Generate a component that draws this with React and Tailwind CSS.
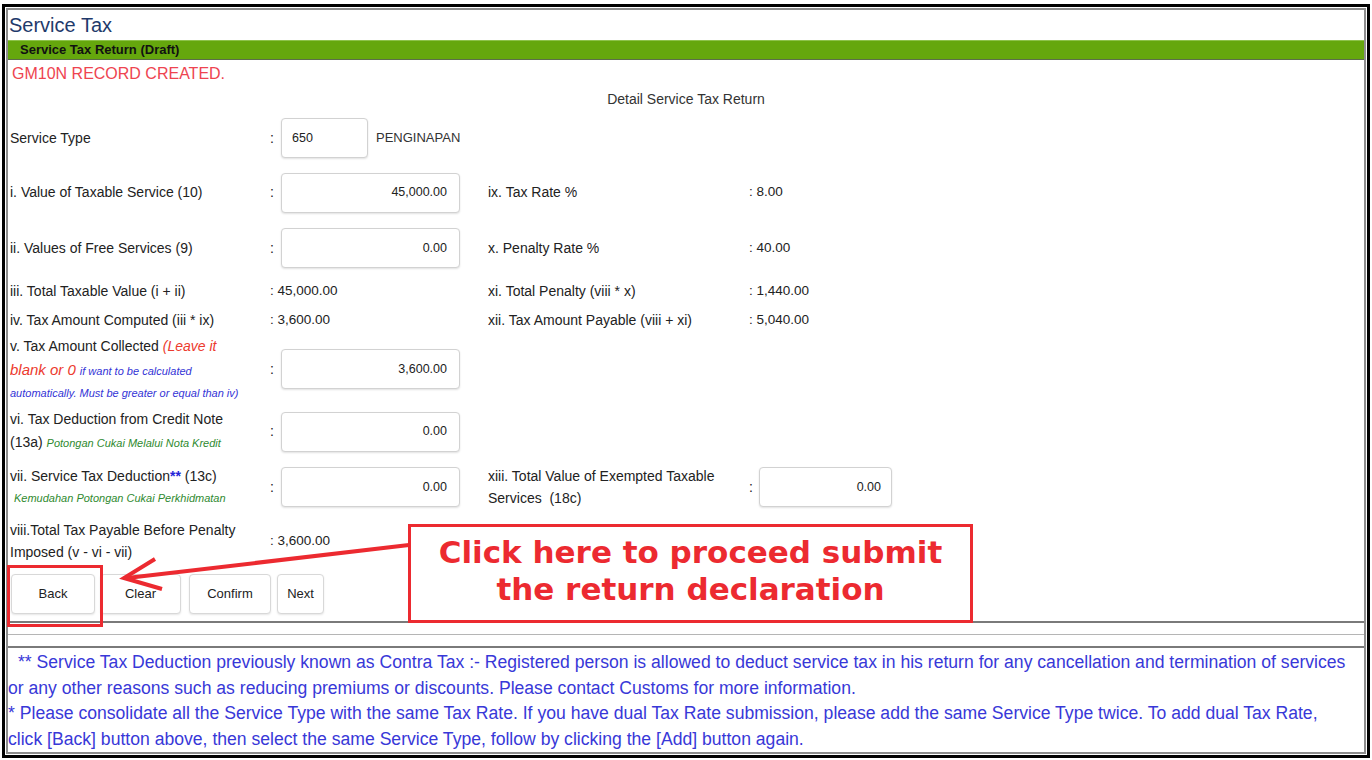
import React from 'react'

const font = { fontFamily: '"Liberation Sans", Arial, sans-serif' }

function Box({ value, className = '' }) {
  return (
    <div className={`h-[40px] border border-[#d2d2d2] rounded-[4px] bg-white shadow-[0_1px_2px_rgba(0,0,0,0.12)] flex items-center text-[12.5px] text-[#222] ${className}`}>
      {value}
    </div>
  )
}

function Colon() {
  return <div className="w-[11px] shrink-0 text-[14px] text-[#222]">:</div>
}

function Row({ h, children }) {
  return <div className={`flex items-center ${h}`}>{children}</div>
}

export default function App() {
  return (
    <div className="relative w-[1372px] h-[760px] bg-white overflow-hidden" style={font}>
      <div className="mx-[2px] mt-[4px] h-[754px] border-[3px] border-black p-[1px]">
        <div className="h-full border-2 border-[#8c8c8c] flex flex-col text-[#222]">
          {/* Title */}
          <div className="h-[30px] pl-[1px] text-[20px] leading-[30px] text-[#1f3a6b]">Service Tax</div>

          {/* Green bar */}
          <div className="h-[20px] bg-[#65a70d] border-t border-[#8dc24a] border-b border-b-[#5c6d4a] pl-[12px] text-[13px] font-bold leading-[18px] text-[#111]">
            Service Tax Return (Draft)
          </div>

          {/* Message */}
          <div className="h-[28px] pl-[4px] text-[16px] leading-[28px] text-[#ee4450]">GM10N RECORD CREATED.</div>

          <div className="h-[23px] text-center text-[14px] leading-[23px] text-[#333]">Detail Service Tax Return</div>

          {/* Form */}
          <div className="pl-[2px] text-[14px]">
            <Row h="h-[54px]">
              <div className="w-[260px] shrink-0">Service Type</div>
              <Colon />
              <Box value="650" className="w-[87px] pl-[10px]" />
              <div className="ml-[8px] text-[13px] text-[#333]">PENGINAPAN</div>
            </Row>

            <Row h="h-[55px]">
              <div className="w-[260px] shrink-0">i. Value of Taxable Service (10)</div>
              <Colon />
              <Box value="45,000.00" className="w-[179px] justify-end pr-[12px]" />
              <div className="w-[28px] shrink-0" />
              <div className="w-[261px] shrink-0">ix. Tax Rate %</div>
              <div className="text-[13.5px]">: 8.00</div>
            </Row>

            <Row h="h-[56px]">
              <div className="w-[260px] shrink-0">ii. Values of Free Services (9)</div>
              <Colon />
              <Box value="0.00" className="w-[179px] justify-end pr-[12px]" />
              <div className="w-[28px] shrink-0" />
              <div className="w-[261px] shrink-0">x. Penalty Rate %</div>
              <div className="text-[13.5px]">: 40.00</div>
            </Row>

            <Row h="h-[30px]">
              <div className="w-[260px] shrink-0">iii. Total Taxable Value (i + ii)</div>
              <div className="w-[218px] shrink-0 text-[13.5px]">: 45,000.00</div>
              <div className="w-[261px] shrink-0">xi. Total Penalty (viii * x)</div>
              <div className="text-[13.5px]">: 1,440.00</div>
            </Row>

            <Row h="h-[28px]">
              <div className="w-[260px] shrink-0">iv. Tax Amount Computed (iii * ix)</div>
              <div className="w-[218px] shrink-0 text-[13.5px]">: 3,600.00</div>
              <div className="w-[261px] shrink-0">xii. Tax Amount Payable (viii + xi)</div>
              <div className="text-[13.5px]">: 5,040.00</div>
            </Row>

            <Row h="h-[70px]">
              <div className="w-[260px] shrink-0 leading-[23px]">
                <div>
                  v. Tax Amount Collected <span className="italic text-[#ec3a2e]">(Leave it</span>
                </div>
                <div>
                  <span className="italic text-[15px] text-[#ec3a2e]">blank or 0</span>{' '}
                  <span className="italic text-[11px] text-[#3434d6]">if want to be calculated</span>
                </div>
                <div className="italic text-[11px] text-[#3434d6] leading-[20px]">automatically. Must be greater or equal than iv)</div>
              </div>
              <Colon />
              <Box value="3,600.00" className="w-[179px] justify-end pr-[12px]" />
            </Row>

            <Row h="h-[55px]">
              <div className="w-[260px] shrink-0 leading-[23px]">
                <div>vi. Tax Deduction from Credit Note</div>
                <div>
                  (13a) <span className="italic text-[11px] text-[#2f8a2f]">Potongan Cukai Melalui Nota Kredit</span>
                </div>
              </div>
              <Colon />
              <Box value="0.00" className="w-[179px] justify-end pr-[12px]" />
            </Row>

            <Row h="h-[56px]">
              <div className="w-[260px] shrink-0 leading-[22px]">
                <div>
                  vii. Service Tax Deduction<span className="font-bold text-[#2424d8]">**</span> (13c)
                </div>
                <div className="pl-[4px] italic text-[11px] text-[#2f8a2f]">Kemudahan Potongan Cukai Perkhidmatan</div>
              </div>
              <Colon />
              <Box value="0.00" className="w-[179px] justify-end pr-[12px]" />
              <div className="w-[28px] shrink-0" />
              <div className="w-[261px] shrink-0 leading-[22px]">
                <div>xiii. Total Value of Exempted Taxable</div>
                <div>Services&nbsp; (18c)</div>
              </div>
              <div className="w-[10px] shrink-0">:</div>
              <Box value="0.00" className="w-[133px] justify-end pr-[10px]" />
            </Row>

            <Row h="h-[52px]">
              <div className="w-[260px] shrink-0 leading-[22px]">
                <div>viii.Total Tax Payable Before Penalty</div>
                <div>Imposed (v - vi - vii)</div>
              </div>
              <div className="text-[13.5px]">: 3,600.00</div>
            </Row>
          </div>

          {/* Buttons */}
          <div className="h-[57px] flex items-center pl-[3px] border-b-2 border-[#7a7a7a] text-[13px] text-[#222]">
            <button className="w-[84px] h-[40px] border border-[#d8d8d8] rounded-[4px] bg-white shadow-[0_1px_2px_rgba(0,0,0,0.1)]">Back</button>
            <button className="ml-[5px] w-[81px] h-[40px] border border-[#d8d8d8] rounded-[4px] bg-white shadow-[0_1px_2px_rgba(0,0,0,0.1)]">Clear</button>
            <button className="ml-[8px] w-[82px] h-[40px] border border-[#d8d8d8] rounded-[4px] bg-white shadow-[0_1px_2px_rgba(0,0,0,0.1)]">Confirm</button>
            <button className="ml-[6px] w-[47px] h-[40px] border border-[#d8d8d8] rounded-[4px] bg-white shadow-[0_1px_2px_rgba(0,0,0,0.1)]">Next</button>
          </div>

          <div className="h-[12px] border-b border-[#b5b5b5]" />
          <div className="h-[13px] border-b-2 border-[#7a7a7a]" />

          {/* Footer notes */}
          <div className="pt-[2px] text-[17.6px] leading-[25.5px] text-[#3838d8] whitespace-nowrap">
            <div className="pl-[10px]">
              ** Service Tax Deduction previously known as Contra Tax :- Registered person is allowed to deduct service tax in his return for any cancellation and termination of services
            </div>
            <div>or any other reasons such as reducing premiums or discounts. Please contact Customs for more information.</div>
            <div>* Please consolidate all the Service Type with the same Tax Rate. If you have dual Tax Rate submission, please add the same Service Type twice. To add dual Tax Rate,</div>
            <div>click [Back] button above, then select the same Service Type, follow by clicking the [Add] button again.</div>
          </div>
        </div>
      </div>

      {/* Annotation overlay */}
      <div className="absolute left-[7px] top-[565px] w-[96px] h-[62px] border-[3px] border-[#ec2a30]" />
      <div
        className="absolute left-[408px] top-[524px] w-[565px] h-[99px] border-[3px] border-[#ec2a30] bg-white flex flex-col items-center justify-center pb-[6px] text-[31px] leading-[37px] font-bold text-[#ec2a30]"
        style={{ fontFamily: '"DejaVu Sans", Verdana, sans-serif' }}
      >
        <div>Click here to proceed submit</div>
        <div>the return declaration</div>
      </div>
      <svg className="absolute left-0 top-0 pointer-events-none" width="1372" height="760">
        <line x1="409" y1="545" x2="127" y2="578" stroke="#ec2a30" strokeWidth="4" />
        <polyline points="155,559 124,578 162,589" fill="none" stroke="#ec2a30" strokeWidth="4" strokeLinejoin="miter" />
      </svg>
    </div>
  )
}
